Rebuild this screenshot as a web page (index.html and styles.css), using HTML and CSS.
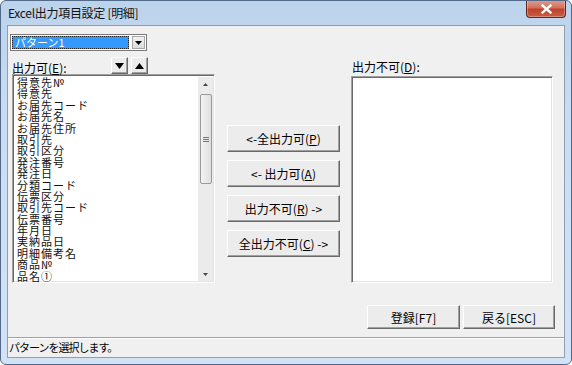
FILE: index.html
```html
<!DOCTYPE html>
<html lang="ja">
<head>
    <meta charset="UTF-8">
    <meta name="viewport" content="width=device-width, initial-scale=1.0">
    <title>Excel出力項目設定 [明細]</title>
    <link rel="stylesheet" href="styles.css">
</head>
<body>
    <div class="window">
        <div class="titlebar">
            <span class="title">Excel出力項目設定 [明細]</span>
            <button class="close-btn" type="button">
                <svg width="11" height="10" viewBox="0 0 11 10">
                    <path d="M1.5 1.5 L9.5 8.5 M9.5 1.5 L1.5 8.5" stroke="#fff" stroke-width="2.4" stroke-linecap="square"/>
                </svg>
            </button>
        </div>
        <div class="client">
            <div class="content">
                <div class="combo">
                    <span class="combo-value">パターン1</span>
                    <span class="combo-drop">
                        <svg width="7" height="4" viewBox="0 0 7 4"><path d="M0 0 H7 L3.5 4 Z" fill="#000"/></svg>
                    </span>
                </div>

                <div class="panels">
                    <div class="panel-left">
                        <div class="list-head">
                            <span class="label">出力可(<u>E</u>):</span>
                            <div class="order-btns">
                                <button class="btn order-btn" type="button">
                                    <svg width="9" height="6" viewBox="0 0 9 6"><path d="M0 0 H9 L4.5 6 Z" fill="#000"/></svg>
                                </button>
                                <button class="btn order-btn" type="button">
                                    <svg width="9" height="6" viewBox="0 0 9 6"><path d="M0 6 H9 L4.5 0 Z" fill="#000"/></svg>
                                </button>
                            </div>
                        </div>
                        <div class="listbox listbox-left">
                            <ul class="items">
                                <li>得意先№</li>
                                <li>得意先</li>
                                <li>お届先コード</li>
                                <li>お届先名</li>
                                <li>お届先住所</li>
                                <li>取引先</li>
                                <li>取引区分</li>
                                <li>発注番号</li>
                                <li>発注日</li>
                                <li>分類コード</li>
                                <li>伝票区分</li>
                                <li>取引先コード</li>
                                <li>伝票番号</li>
                                <li>年月日</li>
                                <li>実納品日</li>
                                <li>明細備考名</li>
                                <li>商品№</li>
                                <li>品名①</li>
                            </ul>
                            <div class="scrollbar">
                                <div class="sb-arrow">
                                    <svg width="5" height="3" viewBox="0 0 5 3"><path d="M0 3 H5 L2.5 0 Z" fill="#444"/></svg>
                                </div>
                                <div class="sb-track">
                                    <div class="sb-thumb">
                                        <span class="sb-grip"></span>
                                    </div>
                                </div>
                                <div class="sb-arrow">
                                    <svg width="5" height="3" viewBox="0 0 5 3"><path d="M0 0 H5 L2.5 3 Z" fill="#444"/></svg>
                                </div>
                            </div>
                        </div>
                    </div>

                    <div class="move-btns">
                        <button class="btn move-btn" type="button">&lt;-全出力可(<u>P</u>)</button>
                        <button class="btn move-btn" type="button">&lt;- 出力可(<u>A</u>)</button>
                        <button class="btn move-btn" type="button">出力不可(<u>R</u>) -&gt;</button>
                        <button class="btn move-btn" type="button">全出力不可(<u>C</u>) -&gt;</button>
                    </div>

                    <div class="panel-right">
                        <span class="label label-right">出力不可(<u>D</u>):</span>
                        <div class="listbox listbox-right"></div>
                    </div>
                </div>

                <div class="actions">
                    <button class="btn action-btn save-btn" type="button">登録[F7]</button>
                    <button class="btn action-btn" type="button">戻る[ESC]</button>
                </div>
            </div>
            <div class="statusbar">パターンを選択します。</div>
        </div>
    </div>
</body>
</html>
```

FILE: styles.css
```css
* {
    box-sizing: border-box;
}
body {
    margin: 0;
    font-family: "Noto Sans CJK JP", "Noto Sans", sans-serif;
    font-size: 12px;
    color: #000;
}
button {
    font-family: inherit;
    font-size: 12px;
    color: #000;
    padding: 0;
    cursor: pointer;
}
.window {
    width: 572px;
    height: 365px;
    border: 1px solid #52698a;
    border-radius: 6px;
    background: linear-gradient(to bottom, #bcd3ec 0%, #c9dcf1 30%, #d3e3f5 100%);
    display: flex;
    flex-direction: column;
    overflow: hidden;
}
.titlebar {
    height: 24px;
    display: flex;
    align-items: flex-start;
    padding-left: 7px;
}
.title {
    line-height: 24px;
    color: #111;
    letter-spacing: -0.3px;
}
.close-btn {
    margin-left: auto;
    margin-right: 5px;
    margin-top: -1px;
    width: 40px;
    height: 18px;
    border: 1px solid #5d2620;
    border-top: none;
    border-radius: 0 0 4px 4px;
    background: linear-gradient(to bottom, #e0a093 0%, #d2705c 45%, #c0412e 55%, #c95e45 100%);
    box-shadow: inset 0 0 0 1px rgba(255, 255, 255, 0.3);
    display: flex;
    align-items: center;
    justify-content: center;
}
.client {
    flex: 1;
    margin: 0 6px 6px 6px;
    border: 1px solid #8c9fb5;
    background: #f0f0f0;
    display: flex;
    flex-direction: column;
}
.content {
    padding: 8px 0 0 2px;
}
.combo {
    width: 137px;
    height: 17px;
    border: 1px solid #7a7a7a;
    background: #fff;
    display: flex;
    padding: 1px;
}
.combo-value {
    flex: 1;
    background: #3399ff;
    color: #fff;
    border: 1px dotted #222;
    font-size: 11px;
    line-height: 11px;
    padding-left: 2px;
    margin-right: 3px;
}
.combo-drop {
    width: 13px;
    background: linear-gradient(to bottom, #f2f2f2, #dcdcdc);
    border: 1px solid #a7a7a7;
    display: flex;
    align-items: center;
    justify-content: center;
}
.panels {
    display: flex;
    align-items: flex-end;
    height: 227px;
    margin-top: 5px;
    margin-left: 2px;
}
.panel-left {
    width: 203px;
}
.list-head {
    height: 18px;
    display: flex;
    align-items: flex-end;
}
.label {
    line-height: 12px;
}
.list-head .label {
    width: 99px;
}
.order-btns {
    display: flex;
    gap: 3px;
    align-self: flex-start;
    margin-top: 1px;
}
.btn {
    background: #ececec;
    border: 1px solid;
    border-color: #fff #696969 #696969 #fff;
    box-shadow: inset -1px -1px 0 #a0a0a0;
}
.order-btn {
    width: 17px;
    height: 17px;
    display: flex;
    align-items: center;
    justify-content: center;
}
.listbox {
    background: #fff;
    border: 1px solid;
    border-color: #a0a0a0 #fff #fff #a0a0a0;
    box-shadow: inset 1px 1px 0 #696969, inset -1px -1px 0 #e3e3e3;
}
.listbox-left {
    height: 209px;
    display: flex;
    padding: 2px 1px 1px 2px;
}
.items {
    list-style: none;
    margin: 0;
    padding: 0 0 0 2px;
    flex: 1;
}
.items li {
    font-size: 11px;
    letter-spacing: 1px;
    line-height: 11.4px;
    height: 11.4px;
    white-space: nowrap;
    color: #111;
}
.scrollbar {
    width: 15px;
    display: flex;
    flex-direction: column;
    background: #ebebeb;
}
.sb-arrow {
    height: 14px;
    display: flex;
    align-items: center;
    justify-content: center;
}
.sb-track {
    flex: 1;
    padding: 3px 1px 0 2px;
}
.sb-thumb {
    height: 90px;
    border: 1px solid #9a9a9a;
    border-radius: 2px;
    background: linear-gradient(to right, #f4f4f4, #dedede);
    display: flex;
    align-items: center;
    justify-content: center;
}
.sb-grip {
    width: 6px;
    height: 5px;
    border-top: 1px solid #777;
    border-bottom: 1px solid #777;
    position: relative;
}
.sb-grip::after {
    content: "";
    position: absolute;
    left: 0;
    right: 0;
    top: 1px;
    border-top: 1px solid #777;
}
.move-btns {
    align-self: flex-start;
    width: 113px;
    margin-left: 12px;
    padding-top: 69px;
    display: flex;
    flex-direction: column;
    gap: 8px;
}
.move-btn {
    height: 27px;
}
.panel-right {
    width: 202px;
    margin-left: 11px;
    display: flex;
    flex-direction: column;
}
.label-right {
    margin-bottom: 3px;
    padding-left: 1px;
}
.listbox-right {
    height: 207px;
}
.actions {
    margin-top: 22px;
    padding-right: 9px;
    display: flex;
    justify-content: flex-end;
    gap: 3px;
}
.action-btn {
    width: 92px;
    height: 24px;
}
.save-btn {
    width: 93px;
}
.statusbar {
    margin-top: auto;
    height: 20px;
    border-top: 1px solid #a0a0a0;
    box-shadow: inset 0 1px 0 #fff;
    padding-left: 1px;
    font-size: 11px;
    letter-spacing: -1px;
    line-height: 19px;
}
```
